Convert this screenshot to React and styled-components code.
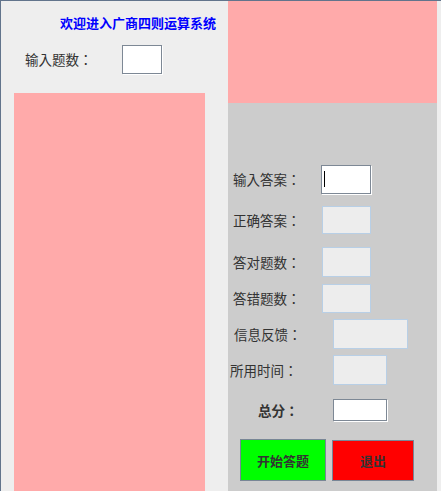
import styled, { createGlobalStyle } from "styled-components";

const GlobalStyle = createGlobalStyle`
    html, body {
        margin: 0;
        padding: 0;
        background: #eeeeee;
    }
    * {
        box-sizing: border-box;
    }
`;

const Frame = styled.div`
    display: grid;
    grid-template-columns: 227px 209px 1fr;
    width: 441px;
    height: 491px;
    border-top: 1px solid #62748c;
    border-left: 1px solid #62748c;
    background: #eeeeee;
    font-family: "Noto Sans CJK SC", "Noto Sans", sans-serif;
    font-size: 13px;
    color: #333333;
    overflow: hidden;
`;

const LeftColumn = styled.div`
    display: flex;
    flex-direction: column;
    min-height: 0;
`;

const Header = styled.div`
    height: 44px;
    padding: 14px 0 0 59px;
    line-height: 15px;
    font-weight: bold;
    color: #0000ff;
    white-space: nowrap;
`;

const CountRow = styled.div`
    display: grid;
    grid-template-columns: 97px 40px;
    align-items: center;
    padding-left: 24px;
    height: 29px;
`;

// the JP face keeps the full-width colon centred, as the reference shows it
const Label = styled.span`
    padding-left: ${p => p.$indent || 0}px;
    font-family: "Noto Sans CJK JP", "Noto Sans CJK SC", sans-serif;
    font-size: 13.5px;
    font-weight: ${p => p.$bold ? "bold" : "normal"};
    white-space: nowrap;
    line-height: 15px;
`;

const Field = styled.div`
    position: relative;
    width: ${p => p.$w}px;
    height: ${p => p.$h}px;
    background: ${p => p.$readonly ? "#ededed" : "#ffffff"};
    border: 1px solid ${p => p.$readonly ? "#b8cfe6" : "#7d8895"};
    box-shadow: ${p => p.$readonly ? "none" : "1px 1px 0 #ffffff"};
`;

const Caret = styled.span`
    position: absolute;
    left: 2px;
    top: 5px;
    width: 1px;
    height: 16px;
    background: #000000;
`;

const Canvas = styled.div`
    flex: 1;
    margin: 19px 0 0 13px;
    width: 191px;
    background: #ffaaaa;
`;

const RightColumn = styled.div`
    display: flex;
    flex-direction: column;
`;

const TopPanel = styled.div`
    height: 102px;
    background: #ffaaaa;
`;

const FormPanel = styled.div`
    flex: 1;
    background: #cccccc;
    padding-top: 62px;
    display: flex;
    flex-direction: column;
`;

const Row = styled.div`
    display: grid;
    grid-template-columns: ${p => p.$boxAt}px auto;
    align-items: center;
    margin-top: ${p => p.$mt || 0}px;
`;

const ButtonRow = styled.div`
    display: flex;
    align-items: flex-end;
    gap: 6px;
    padding-left: 12px;
    margin-top: 18px;
`;

const Button = styled.button`
    width: ${p => p.$w}px;
    height: ${p => p.$h}px;
    background: ${p => p.$bg};
    border: 1px solid #788696;
    font-family: "Noto Sans CJK SC", "Noto Sans", sans-serif;
    font-size: 13px;
    font-weight: bold;
    color: #333333;
    padding: 0;
    cursor: pointer;
`;

const fields = [
    { label: "输入答案：", indent: 5, boxAt: 93, w: 50, h: 29, mt: 0, caret: true },
    { label: "正确答案：", indent: 5, boxAt: 94, w: 49, h: 28, mt: 12, readonly: true },
    { label: "答对题数：", indent: 5, boxAt: 94, w: 49, h: 30, mt: 13, readonly: true },
    { label: "答错题数：", indent: 5, boxAt: 94, w: 49, h: 29, mt: 7, readonly: true },
    { label: "信息反馈：", indent: 6, boxAt: 105, w: 75, h: 30, mt: 6, readonly: true },
    { label: "所用时间：", indent: 2, boxAt: 105, w: 54, h: 30, mt: 6, readonly: true },
    { label: "总分：", indent: 30, boxAt: 105, w: 54, h: 22, mt: 14, bold: true },
];

export default function App() {
    return <>
        <GlobalStyle />
        <Frame>
            <LeftColumn>
                <Header>欢迎进入广商四则运算系统</Header>
                <CountRow>
                    <Label>输入题数：</Label>
                    <Field $w={40} $h={29} />
                </CountRow>
                <Canvas />
            </LeftColumn>
            <RightColumn>
                <TopPanel />
                <FormPanel>
                    {fields.map(f =>
                        <Row key={f.label} $boxAt={f.boxAt} $mt={f.mt}>
                            <Label $indent={f.indent} $bold={f.bold}>{f.label}</Label>
                            <Field $w={f.w} $h={f.h} $readonly={f.readonly}>
                                {f.caret && <Caret />}
                            </Field>
                        </Row>
                    )}
                    <ButtonRow>
                        <Button $w={86} $h={42} $bg="#00ff00">开始答题</Button>
                        <Button $w={82} $h={41} $bg="#ff0000">退出</Button>
                    </ButtonRow>
                </FormPanel>
            </RightColumn>
        </Frame>
    </>
}
